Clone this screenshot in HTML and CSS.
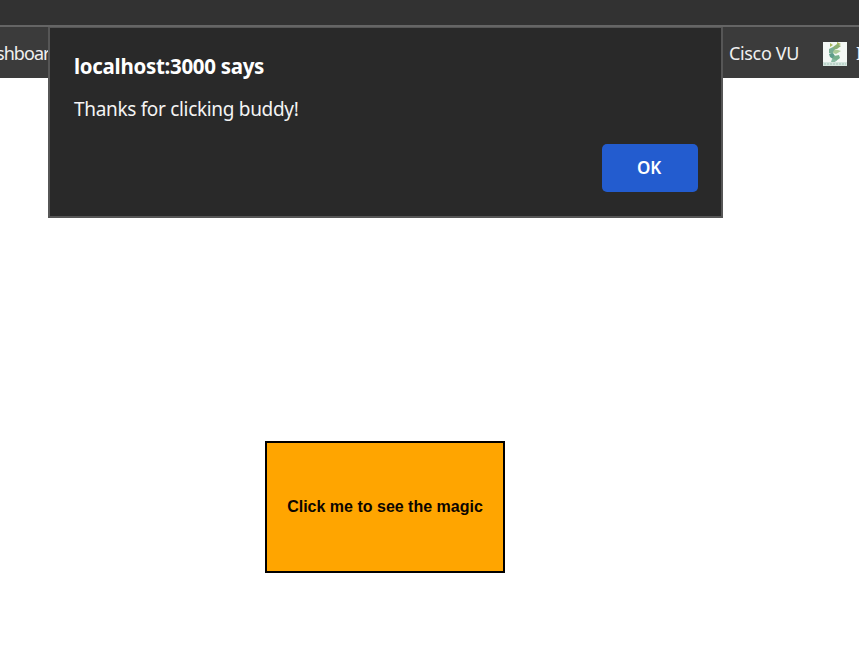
FILE: index.html
```html
<!DOCTYPE html>
<html lang="en">
<head>
<meta charset="utf-8">
<title>localhost:3000</title>
<link rel="stylesheet" href="styles.css">
</head>
<body>
<header class="toolbar"></header>
<nav class="bookmarks">
  <span class="bookmark bookmark-left">shboar</span>
  <span class="bookmark bookmark-cisco">Cisco VU</span>
  <svg class="favicon" viewBox="0 0 24 24" aria-hidden="true">
    <rect width="24" height="24" fill="#f4f8f5"/>
    <path d="M7 1l3 2-3 2zM14 0l4 2-4 2z" fill="#a9b95d"/>
    <path d="M10 5l4-3 4 2-4 3-4 1z" fill="#8caf73"/>
    <path d="M6 7l4-2 2 3-3 4-3-1z" fill="#79ad93"/>
    <path d="M11 8l4 0 3 1-5 3-3-1z" fill="#accb98"/>
    <path d="M6 12l4-1 2 3-2 3-3-2z" fill="#5e9d8a"/>
    <path d="M11 14l5-1 1 3-4 3-4-1z" fill="#76b08c"/>
    <path d="M9 17l5 1-3 3-3-1z" fill="#8bbca5"/>
    <path d="M0 20h24v4H0z" fill="#d5e5de"/>
    <path d="M1 22h22" stroke="#a3c3b7" stroke-dasharray="2 1"/>
  </svg>
  <span class="bookmark bookmark-next">I</span>
</nav>
<main class="page">
  <button class="magic">Click me to see the magic</button>
</main>
<section class="dialog" role="alertdialog">
  <h1 class="dialog-title">localhost:3000 says</h1>
  <p class="dialog-message">Thanks for clicking buddy!</p>
  <button class="ok">OK</button>
</section>
</body>
</html>
```
FILE: styles.css
```css
* { box-sizing: border-box; }

body {
  margin: 0;
  width: 859px;
  height: 666px;
  overflow: hidden;
  background: #fff;
  font-family: "Noto Sans", "Open Sans", sans-serif;
}

.toolbar {
  height: 27px;
  background: #323232;
  border-bottom: 2px solid #656565;
}

.bookmarks {
  display: flex;
  align-items: center;
  height: 51px;
  overflow: hidden;
  background: #3b3b3b;
  color: #f0f0f0;
  font-size: 18px;
  line-height: 24px;
  white-space: nowrap;
}

.bookmark { flex: none; letter-spacing: -0.35px; }
.bookmark-left { width: 733px; margin-left: -4px; letter-spacing: -0.95px; }
.bookmark-cisco { width: 94px; }
.favicon { flex: none; width: 24px; height: 24px; margin-top: 3px; }
.bookmark-next { margin-left: 9px; }

.page {
  display: flex;
  justify-content: center;
  width: 770px;
  padding-top: 363px;
}

.magic {
  width: 240px;
  height: 132px;
  padding: 0;
  border: 2px solid #000;
  background: #ffa500;
  color: #0c0500;
  font: bold 16px "Liberation Sans", sans-serif;
}

.dialog {
  position: absolute;
  top: 27px;
  left: 48px;
  display: flex;
  flex-direction: column;
  width: 675px;
  height: 191px;
  padding: 24px 23px 24px 24px;
  border: 2px solid #565656;
  border-top-width: 1px;
  background: #292929;
  color: #fff;
}

.dialog-title {
  margin: 0;
  font-size: 20.5px;
  font-weight: 700;
  line-height: 29px;
  letter-spacing: -0.3px;
}

.dialog-message {
  margin: 14px 0 0;
  color: #f4f4f4;
  font-size: 19px;
  line-height: 28px;
  letter-spacing: -0.32px;
}

.ok {
  align-self: flex-end;
  width: 96px;
  height: 48px;
  margin-top: 21px;
  padding: 0 2px 2px 0;
  border: 0;
  border-radius: 5px;
  background: #235ccf;
  color: #fff;
  font: 600 17px "Noto Sans", sans-serif;
  letter-spacing: -0.3px;
}
```
